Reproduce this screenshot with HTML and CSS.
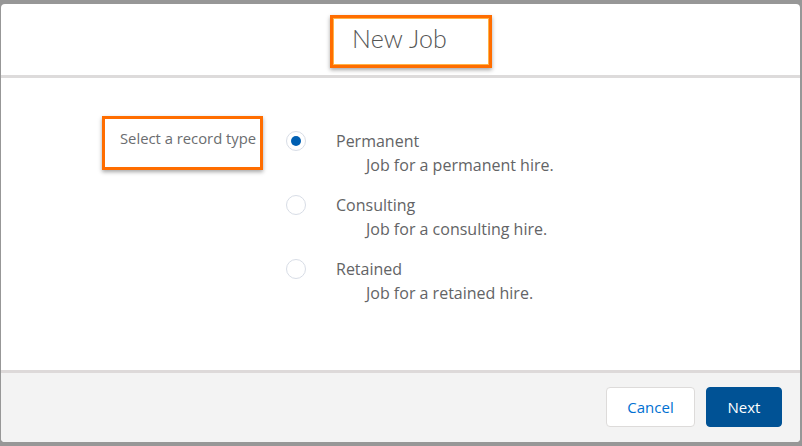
FILE: index.html
```html
<!DOCTYPE html>
<html>
<head>
<meta charset="utf-8">
<link rel="stylesheet" href="styles.css">
</head>
<body>
<div class="modal">
  <header class="modal-header">
    <div class="title-box"><h2 class="title">New Job</h2></div>
  </header>
  <div class="modal-body">
    <div class="label-box"><span class="label">Select a record type</span></div>
    <div class="options">
      <div class="option">
        <span class="radio checked"></span>
        <div class="option-text">
          <div class="option-name">Permanent</div>
          <div class="option-desc">Job for a permanent hire.</div>
        </div>
      </div>
      <div class="option">
        <span class="radio"></span>
        <div class="option-text">
          <div class="option-name">Consulting</div>
          <div class="option-desc">Job for a consulting hire.</div>
        </div>
      </div>
      <div class="option">
        <span class="radio"></span>
        <div class="option-text">
          <div class="option-name">Retained</div>
          <div class="option-desc">Job for a retained hire.</div>
        </div>
      </div>
    </div>
  </div>
  <footer class="modal-footer">
    <button class="btn btn-neutral">Cancel</button>
    <button class="btn btn-brand">Next</button>
  </footer>
</div>
</body>
</html>
```
FILE: styles.css
```css
html, body {
  margin: 0;
  padding: 0;
}
body {
  background: #979797;
  width: 802px;
  height: 446px;
  overflow: hidden;
  font-family: "Open Sans", "Noto Sans", sans-serif;
}
.modal {
  margin: 4px 0 0 1px;
  width: 799px;
  height: 438px;
  background: #ffffff;
  border-radius: 4px;
  display: flex;
  flex-direction: column;
  overflow: hidden;
}
.modal-header {
  height: 71px;
  flex: 0 0 71px;
  display: flex;
  justify-content: center;
  align-items: flex-start;
  border-bottom: 3px solid #dddbdb;
}
.title-box {
  margin-top: 11px;
  margin-left: 21px;
  width: 162px;
  height: 53px;
  box-sizing: border-box;
  border: 3px solid #ff6d00;
  box-shadow: inset 0 0 0 1px #ffb347, 0 2px 4px rgba(0,0,0,0.35);
  padding: 5px 0 0 19px;
}
.title {
  margin: 0;
  font-family: "Lato", sans-serif;
  font-weight: 300;
  font-size: 25px;
  line-height: 30px;
  color: #555555;
  letter-spacing: 0.2px;
}
.modal-body {
  flex: 1 1 auto;
  display: flex;
  align-items: flex-start;
  padding-top: 38px;
}
.label-box {
  margin-left: 101px;
  width: 161px;
  height: 54px;
  box-sizing: border-box;
  border: 3px solid #ff6d00;
  box-shadow: 0 2px 4px rgba(0,0,0,0.35);
  padding: 8px 0 0 15px;
}
.label {
  font-size: 14.8px;
  color: #6b6d70;
  line-height: 20px;
  white-space: nowrap;
}
.options {
  margin-left: 23px;
  margin-top: 14px;
  display: flex;
  flex-direction: column;
  gap: 17px;
}
.option {
  display: flex;
  align-items: flex-start;
}
.radio {
  width: 20px;
  height: 20px;
  border: 1px solid #d8dde6;
  border-radius: 50%;
  box-sizing: border-box;
  flex: 0 0 auto;
  margin-top: 1px;
  position: relative;
  background: #fff;
}
.radio.checked::after {
  content: "";
  position: absolute;
  left: 4px;
  top: 4px;
  width: 10px;
  height: 10px;
  border-radius: 50%;
  background: #005fb2;
}
.option-text {
  margin-left: 30px;
}
.option-name {
  font-size: 16px;
  line-height: 22px;
  color: #636466;
}
.option-desc {
  margin-top: 1px;
  margin-left: 30px;
  font-size: 16px;
  line-height: 24px;
  color: #636466;
}
.modal-footer {
  flex: 0 0 72px;
  height: 72px;
  box-sizing: border-box;
  border-top: 3px solid #ddd9d9;
  background: #f3f3f3;
  display: flex;
  justify-content: flex-end;
  align-items: center;
  padding-right: 18px;
  padding-bottom: 2px;
  gap: 11px;
}
.btn {
  height: 40px;
  border-radius: 4px;
  font-family: "Open Sans", sans-serif;
  font-size: 15px;
  padding: 0;
  cursor: pointer;
}
.btn-neutral {
  width: 89px;
  background: #ffffff;
  border: 1px solid #dddbda;
  color: #0070d2;
}
.btn-brand {
  width: 76px;
  background: #005295;
  border: 1px solid #005295;
  color: #ffffff;
}
```
